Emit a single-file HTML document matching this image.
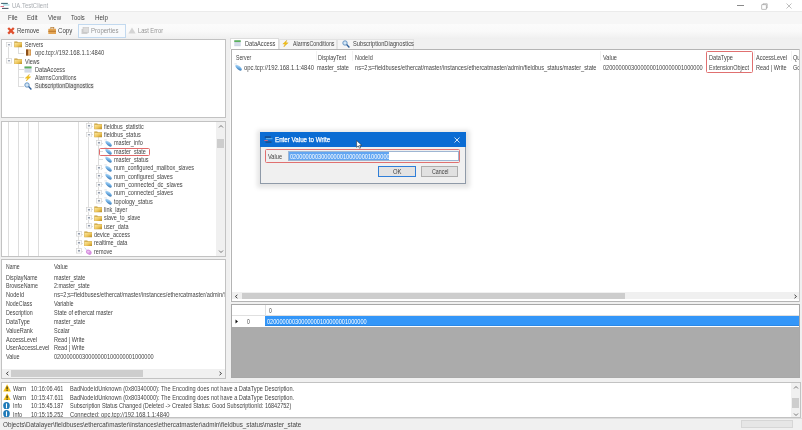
<!DOCTYPE html>
<html><head><meta charset="utf-8">
<style>
*{margin:0;padding:0;box-sizing:border-box}
html,body{width:802px;height:430px;overflow:hidden;background:#f0f0f0;font-family:"Liberation Sans",sans-serif;color:#444;font-size:5.7px;line-height:1;position:relative}
.a{position:absolute;display:block}
.t{position:absolute;white-space:nowrap;line-height:8px;height:8px;transform-origin:0 0;-webkit-text-stroke:0px currentColor}
</style></head><body>
<div class="a" style="left:0px;top:0px;width:802px;height:11px;background:#fff"></div>
<svg class="a" style="left:0px;top:2px" width="11" height="8" viewBox="0 0 11 8"><rect x="1.1" y="0.9" width="6.7" height="0.9" fill="#1f4f5f"/><rect x="3" y="2.5" width="6.5" height="0.9" fill="#7cc6d6"/><rect x="0.5" y="4.1" width="3.5" height="0.9" fill="#e0607a"/><rect x="2" y="5.9" width="6.5" height="0.9" fill="#2d3f4f"/></svg>
<div class="t" style="left:11.5px;top:1.60px;font-size:7.3px;transform:scaleX(0.8166);color:#a9adb2;">UA.TestClient</div>
<div class="a" style="left:736.5px;top:5px;width:7px;height:0.6px;background:#8a8a8a"></div>
<svg class="a" style="left:760.5px;top:2.5px" width="7" height="7" viewBox="0 0 7 7"><rect x="0.8" y="1.8" width="4.4" height="4.4" fill="none" stroke="#8a8a8a" stroke-width="0.55"/><path d="M2 1.8V0.8h4.2v4.2h-1" fill="none" stroke="#8a8a8a" stroke-width="0.55"/></svg>
<svg class="a" style="left:786px;top:3px" width="6" height="6" viewBox="0 0 6 6"><path d="M0.5 0.5L5.5 5.5M5.5 0.5L0.5 5.5" stroke="#8a8a8a" stroke-width="0.55"/></svg>
<div class="a" style="left:0px;top:11px;width:802px;height:13px;background:#f6f6f6;border-top:1px solid #ebebeb"></div>
<div class="t" style="left:7.5px;top:13.90px;font-size:6.6px;transform:scaleX(0.9149);">File</div>
<div class="t" style="left:27px;top:13.90px;font-size:6.6px;transform:scaleX(0.9172);">Edit</div>
<div class="t" style="left:47.6px;top:13.90px;font-size:6.6px;transform:scaleX(0.9192);">View</div>
<div class="t" style="left:71px;top:13.90px;font-size:6.6px;transform:scaleX(0.8854);">Tools</div>
<div class="t" style="left:94.6px;top:13.90px;font-size:6.6px;transform:scaleX(0.9533);">Help</div>
<div class="a" style="left:0px;top:24px;width:802px;height:15px;background:linear-gradient(#fbfbfb 0%,#f9f9f9 50%,#efefef 100%)"></div>
<svg class="a" style="left:7px;top:27px" width="8" height="7.5" viewBox="0 0 8 7.5"><path d="M1.2 1L6.8 6.6M6.8 1L1.2 6.6" stroke="#e0502f" stroke-width="2.3"/></svg>
<div class="t" style="left:16.8px;top:26.90px;font-size:6.6px;transform:scaleX(0.9142);">Remove</div>
<svg class="a" style="left:47.5px;top:26.5px" width="8.5" height="7.5" viewBox="0 0 8.5 7.5"><rect x="2.8" y="0.5" width="3" height="1.6" fill="none" stroke="#b27a30" stroke-width="0.7"/><rect x="0.3" y="1.8" width="8" height="5.6" rx="0.6" fill="#e3a453"/><rect x="0.3" y="3.8" width="8" height="1" fill="#b8772c"/></svg>
<div class="t" style="left:57.6px;top:26.90px;font-size:6.6px;transform:scaleX(0.9309);">Copy</div>
<div class="a" style="left:78px;top:24px;width:48px;height:14px;border:1px solid #c2d9ef;background:#f8fafc"></div>
<svg class="a" style="left:80.5px;top:27px" width="8.5" height="7.5" viewBox="0 0 8.5 7.5"><rect x="0.5" y="2" width="6" height="5" fill="#cfcfcf"/><rect x="2" y="0.5" width="6" height="5" fill="#dcdcdc" stroke="#bdbdbd" stroke-width="0.5"/></svg>
<div class="t" style="left:90.6px;top:26.90px;font-size:6.6px;transform:scaleX(0.9137);color:#959595;">Properties</div>
<svg class="a" style="left:128px;top:27px" width="8" height="7" viewBox="0 0 8 7"><path d="M4 0.5L7.6 6.6H0.4Z" fill="#d4d4d4"/></svg>
<div class="t" style="left:138px;top:26.90px;font-size:6.6px;transform:scaleX(0.8655);color:#959595;">Last Error</div>
<div class="a" style="left:1px;top:39px;width:225px;height:79px;background:#fff;border:1px solid #c2c2c2"></div>
<div class="a" style="left:8.4px;top:46.4px;width:0.6px;height:12.5px;background:#dddddd"></div>
<div class="a" style="left:18.4px;top:47.4px;width:0.6px;height:5.25px;background:#dddddd"></div>
<div class="a" style="left:18.4px;top:52.65px;width:5.600000000000001px;height:0.6px;background:#dddddd"></div>
<div class="a" style="left:18.4px;top:63.9px;width:0.6px;height:21.750000000000007px;background:#dddddd"></div>
<div class="a" style="left:18.4px;top:69.15px;width:5.600000000000001px;height:0.6px;background:#dddddd"></div>
<div class="a" style="left:18.4px;top:77.4px;width:5.600000000000001px;height:0.6px;background:#dddddd"></div>
<div class="a" style="left:18.4px;top:85.65px;width:5.600000000000001px;height:0.6px;background:#dddddd"></div>
<svg class="a" style="left:5.6px;top:41.6px" width="6" height="5.6" viewBox="0 0 6 5.6"><rect x="0.5" y="0.5" width="5" height="4.6" fill="#fff" stroke="#d4d4d4" stroke-width="0.7"/><path d="M1.9 2.8h2.2" stroke="#45546e" stroke-width="0.7"/></svg>
<svg class="a" style="left:14px;top:41.4px" width="8.4" height="6.6" viewBox="0 0 8.4 6.6"><defs><linearGradient id="fg" x1="0" y1="0" x2="1" y2="1"><stop offset="0" stop-color="#fbe9a6"/><stop offset="0.55" stop-color="#eec65a"/><stop offset="1" stop-color="#b88a22"/></linearGradient></defs><path d="M0.3 0.5h2.9l0.8 0.8h4.1v5h-7.8z" fill="#c49a34"/><rect x="0.6" y="1.7" width="7.3" height="4.3" fill="url(#fg)"/></svg>
<div class="t" style="left:25px;top:41.00px;font-size:6.6px;transform:scaleX(0.8028);">Servers</div>
<svg class="a" style="left:24.5px;top:49.15px" width="7" height="7" viewBox="0 0 7 7"><rect x="1" y="0.5" width="5" height="6" fill="#c07a30"/><rect x="1" y="0.5" width="2" height="6" fill="#8a4f1a"/><rect x="3.3" y="1.2" width="2.2" height="4.6" fill="#f0c080"/></svg>
<div class="t" style="left:35px;top:49.25px;font-size:6.6px;transform:scaleX(0.8868);">opc.tcp://192.168.1.1:4840</div>
<svg class="a" style="left:5.6px;top:58.1px" width="6" height="5.6" viewBox="0 0 6 5.6"><rect x="0.5" y="0.5" width="5" height="4.6" fill="#fff" stroke="#d4d4d4" stroke-width="0.7"/><path d="M1.9 2.8h2.2" stroke="#45546e" stroke-width="0.7"/></svg>
<svg class="a" style="left:14px;top:57.9px" width="8.4" height="6.6" viewBox="0 0 8.4 6.6"><defs><linearGradient id="fg" x1="0" y1="0" x2="1" y2="1"><stop offset="0" stop-color="#fbe9a6"/><stop offset="0.55" stop-color="#eec65a"/><stop offset="1" stop-color="#b88a22"/></linearGradient></defs><path d="M0.3 0.5h2.9l0.8 0.8h4.1v5h-7.8z" fill="#c49a34"/><rect x="0.6" y="1.7" width="7.3" height="4.3" fill="url(#fg)"/></svg>
<div class="t" style="left:25px;top:57.50px;font-size:6.6px;transform:scaleX(0.8350);">Views</div>
<svg class="a" style="left:24px;top:65.65px" width="8" height="7" viewBox="0 0 8 7"><rect x="0.5" y="0.5" width="7" height="6" fill="#c9d3e3"/><rect x="0.5" y="0.5" width="7" height="1.8" fill="#5bb15b"/><path d="M0.5 3.6h7M0.5 5h7" stroke="#f2f4f8" stroke-width="0.4"/></svg>
<div class="t" style="left:35px;top:65.75px;font-size:6.6px;transform:scaleX(0.8517);">DataAccess</div>
<svg class="a" style="left:24px;top:73.9px" width="8" height="7.5" viewBox="0 0 8 7.5"><path d="M5.5 0.2L1.2 4.2H3.6L2 7.3L6.8 2.8H4.3Z" fill="#f2c21b" stroke="#d49a00" stroke-width="0.3"/></svg>
<div class="t" style="left:35px;top:74.00px;font-size:6.6px;transform:scaleX(0.7990);">AlarmsConditions</div>
<div class="a" style="left:34.4px;top:82.85000000000001px;width:59.7px;height:5.7px;background:#f2f2f2"></div>
<svg class="a" style="left:24px;top:82.15px" width="8" height="8" viewBox="0 0 8 8"><circle cx="3" cy="3" r="2.2" fill="#d3e6f6" stroke="#5d8fc0" stroke-width="0.9"/><path d="M4.6 4.6L7.4 7.4" stroke="#2e5f99" stroke-width="1.4"/></svg>
<div class="t" style="left:35px;top:82.25px;font-size:6.6px;transform:scaleX(0.8317);">SubscriptionDiagnostics</div>
<div class="a" style="left:1px;top:121px;width:225px;height:136px;background:#fff;border:1px solid #c2c2c2"></div>
<div class="a" style="left:8.4px;top:122px;width:0.6px;height:134px;background:#dddddd"></div>
<div class="a" style="left:18.4px;top:122px;width:0.6px;height:134px;background:#dddddd"></div>
<div class="a" style="left:28.4px;top:122px;width:0.6px;height:134px;background:#dddddd"></div>
<div class="a" style="left:38.4px;top:122px;width:0.6px;height:134px;background:#dddddd"></div>
<div class="a" style="left:78.4px;top:122px;width:0.6px;height:128.9px;background:#dddddd"></div>
<div class="a" style="left:88.4px;top:122px;width:0.6px;height:103.94px;background:#dddddd"></div>
<div class="a" style="left:98.4px;top:137.42px;width:0.6px;height:63.56px;background:#dddddd"></div>
<div class="a" style="left:88.4px;top:126.1px;width:5.0px;height:0.6px;background:#dddddd"></div>
<svg class="a" style="left:85.6px;top:123.3px" width="6" height="5.6" viewBox="0 0 6 5.6"><rect x="0.5" y="0.5" width="5" height="4.6" fill="#fff" stroke="#d4d4d4" stroke-width="0.7"/><path d="M1.9 2.8h2.2" stroke="#45546e" stroke-width="0.7"/><path d="M3 1.8v2" stroke="#6a7890" stroke-width="0.5"/></svg>
<svg class="a" style="left:93.5px;top:123.1px" width="8.4" height="6.6" viewBox="0 0 8.4 6.6"><defs><linearGradient id="fg" x1="0" y1="0" x2="1" y2="1"><stop offset="0" stop-color="#fbe9a6"/><stop offset="0.55" stop-color="#eec65a"/><stop offset="1" stop-color="#b88a22"/></linearGradient></defs><path d="M0.3 0.5h2.9l0.8 0.8h4.1v5h-7.8z" fill="#c49a34"/><rect x="0.6" y="1.7" width="7.3" height="4.3" fill="url(#fg)"/></svg>
<div class="t" style="left:104.10000000000001px;top:122.70px;font-size:6.6px;transform:scaleX(0.8203);">fieldbus_statistic</div>
<div class="a" style="left:88.4px;top:134.42px;width:5.0px;height:0.6px;background:#dddddd"></div>
<svg class="a" style="left:85.6px;top:131.62px" width="6" height="5.6" viewBox="0 0 6 5.6"><rect x="0.5" y="0.5" width="5" height="4.6" fill="#fff" stroke="#d4d4d4" stroke-width="0.7"/><path d="M1.9 2.8h2.2" stroke="#45546e" stroke-width="0.7"/></svg>
<svg class="a" style="left:93.5px;top:131.42px" width="8.4" height="6.6" viewBox="0 0 8.4 6.6"><defs><linearGradient id="fg" x1="0" y1="0" x2="1" y2="1"><stop offset="0" stop-color="#fbe9a6"/><stop offset="0.55" stop-color="#eec65a"/><stop offset="1" stop-color="#b88a22"/></linearGradient></defs><path d="M0.3 0.5h2.9l0.8 0.8h4.1v5h-7.8z" fill="#c49a34"/><rect x="0.6" y="1.7" width="7.3" height="4.3" fill="url(#fg)"/></svg>
<div class="t" style="left:104.10000000000001px;top:131.02px;font-size:6.6px;transform:scaleX(0.8350);">fieldbus_status</div>
<div class="a" style="left:98.4px;top:142.74px;width:5.0px;height:0.6px;background:#dddddd"></div>
<svg class="a" style="left:95.6px;top:139.94px" width="6" height="5.6" viewBox="0 0 6 5.6"><rect x="0.5" y="0.5" width="5" height="4.6" fill="#fff" stroke="#d4d4d4" stroke-width="0.7"/><path d="M1.9 2.8h2.2" stroke="#45546e" stroke-width="0.7"/><path d="M3 1.8v2" stroke="#6a7890" stroke-width="0.5"/></svg>
<svg class="a" style="left:103.60000000000001px;top:138.74px" width="8.5" height="8.5" viewBox="0 0 8.5 8.5"><defs><linearGradient id="vg" x1="0" y1="0" x2="1" y2="1"><stop offset="0" stop-color="#d6ecfb"/><stop offset="0.5" stop-color="#6fb0e6"/><stop offset="1" stop-color="#2a5f96"/></linearGradient></defs><path d="M0.4 0.9h2.4" stroke="#d8dce2" stroke-width="0.9"/><ellipse cx="4.6" cy="4.7" rx="3.9" ry="1.8" transform="rotate(42 4.6 4.7)" fill="url(#vg)"/></svg>
<div class="t" style="left:114.10000000000001px;top:139.34px;font-size:6.6px;transform:scaleX(0.8350);">master_info</div>
<div class="a" style="left:98.4px;top:151.06px;width:5.0px;height:0.6px;background:#dddddd"></div>
<svg class="a" style="left:103.60000000000001px;top:147.06px" width="8.5" height="8.5" viewBox="0 0 8.5 8.5"><defs><linearGradient id="vg" x1="0" y1="0" x2="1" y2="1"><stop offset="0" stop-color="#d6ecfb"/><stop offset="0.5" stop-color="#6fb0e6"/><stop offset="1" stop-color="#2a5f96"/></linearGradient></defs><path d="M0.4 0.9h2.4" stroke="#d8dce2" stroke-width="0.9"/><ellipse cx="4.6" cy="4.7" rx="3.9" ry="1.8" transform="rotate(42 4.6 4.7)" fill="url(#vg)"/></svg>
<div class="t" style="left:114.10000000000001px;top:147.66px;font-size:6.6px;transform:scaleX(0.8350);">master_state</div>
<div class="a" style="left:98.4px;top:159.38px;width:5.0px;height:0.6px;background:#dddddd"></div>
<svg class="a" style="left:103.60000000000001px;top:155.38px" width="8.5" height="8.5" viewBox="0 0 8.5 8.5"><defs><linearGradient id="vg" x1="0" y1="0" x2="1" y2="1"><stop offset="0" stop-color="#d6ecfb"/><stop offset="0.5" stop-color="#6fb0e6"/><stop offset="1" stop-color="#2a5f96"/></linearGradient></defs><path d="M0.4 0.9h2.4" stroke="#d8dce2" stroke-width="0.9"/><ellipse cx="4.6" cy="4.7" rx="3.9" ry="1.8" transform="rotate(42 4.6 4.7)" fill="url(#vg)"/></svg>
<div class="t" style="left:114.10000000000001px;top:155.98px;font-size:6.6px;transform:scaleX(0.8350);">master_status</div>
<div class="a" style="left:98.4px;top:167.7px;width:5.0px;height:0.6px;background:#dddddd"></div>
<svg class="a" style="left:95.6px;top:164.9px" width="6" height="5.6" viewBox="0 0 6 5.6"><rect x="0.5" y="0.5" width="5" height="4.6" fill="#fff" stroke="#d4d4d4" stroke-width="0.7"/><path d="M1.9 2.8h2.2" stroke="#45546e" stroke-width="0.7"/><path d="M3 1.8v2" stroke="#6a7890" stroke-width="0.5"/></svg>
<svg class="a" style="left:103.60000000000001px;top:163.7px" width="8.5" height="8.5" viewBox="0 0 8.5 8.5"><defs><linearGradient id="vg" x1="0" y1="0" x2="1" y2="1"><stop offset="0" stop-color="#d6ecfb"/><stop offset="0.5" stop-color="#6fb0e6"/><stop offset="1" stop-color="#2a5f96"/></linearGradient></defs><path d="M0.4 0.9h2.4" stroke="#d8dce2" stroke-width="0.9"/><ellipse cx="4.6" cy="4.7" rx="3.9" ry="1.8" transform="rotate(42 4.6 4.7)" fill="url(#vg)"/></svg>
<div class="t" style="left:114.10000000000001px;top:164.30px;font-size:6.6px;transform:scaleX(0.8327);">num_configured_mailbox_slaves</div>
<div class="a" style="left:98.4px;top:176.01999999999998px;width:5.0px;height:0.6px;background:#dddddd"></div>
<svg class="a" style="left:95.6px;top:173.22px" width="6" height="5.6" viewBox="0 0 6 5.6"><rect x="0.5" y="0.5" width="5" height="4.6" fill="#fff" stroke="#d4d4d4" stroke-width="0.7"/><path d="M1.9 2.8h2.2" stroke="#45546e" stroke-width="0.7"/><path d="M3 1.8v2" stroke="#6a7890" stroke-width="0.5"/></svg>
<svg class="a" style="left:103.60000000000001px;top:172.01999999999998px" width="8.5" height="8.5" viewBox="0 0 8.5 8.5"><defs><linearGradient id="vg" x1="0" y1="0" x2="1" y2="1"><stop offset="0" stop-color="#d6ecfb"/><stop offset="0.5" stop-color="#6fb0e6"/><stop offset="1" stop-color="#2a5f96"/></linearGradient></defs><path d="M0.4 0.9h2.4" stroke="#d8dce2" stroke-width="0.9"/><ellipse cx="4.6" cy="4.7" rx="3.9" ry="1.8" transform="rotate(42 4.6 4.7)" fill="url(#vg)"/></svg>
<div class="t" style="left:114.10000000000001px;top:172.62px;font-size:6.6px;transform:scaleX(0.8432);">num_configured_slaves</div>
<div class="a" style="left:98.4px;top:184.34px;width:5.0px;height:0.6px;background:#dddddd"></div>
<svg class="a" style="left:95.6px;top:181.54px" width="6" height="5.6" viewBox="0 0 6 5.6"><rect x="0.5" y="0.5" width="5" height="4.6" fill="#fff" stroke="#d4d4d4" stroke-width="0.7"/><path d="M1.9 2.8h2.2" stroke="#45546e" stroke-width="0.7"/><path d="M3 1.8v2" stroke="#6a7890" stroke-width="0.5"/></svg>
<svg class="a" style="left:103.60000000000001px;top:180.34px" width="8.5" height="8.5" viewBox="0 0 8.5 8.5"><defs><linearGradient id="vg" x1="0" y1="0" x2="1" y2="1"><stop offset="0" stop-color="#d6ecfb"/><stop offset="0.5" stop-color="#6fb0e6"/><stop offset="1" stop-color="#2a5f96"/></linearGradient></defs><path d="M0.4 0.9h2.4" stroke="#d8dce2" stroke-width="0.9"/><ellipse cx="4.6" cy="4.7" rx="3.9" ry="1.8" transform="rotate(42 4.6 4.7)" fill="url(#vg)"/></svg>
<div class="t" style="left:114.10000000000001px;top:180.94px;font-size:6.6px;transform:scaleX(0.8590);">num_connected_dc_slaves</div>
<div class="a" style="left:98.4px;top:192.66px;width:5.0px;height:0.6px;background:#dddddd"></div>
<svg class="a" style="left:95.6px;top:189.86px" width="6" height="5.6" viewBox="0 0 6 5.6"><rect x="0.5" y="0.5" width="5" height="4.6" fill="#fff" stroke="#d4d4d4" stroke-width="0.7"/><path d="M1.9 2.8h2.2" stroke="#45546e" stroke-width="0.7"/><path d="M3 1.8v2" stroke="#6a7890" stroke-width="0.5"/></svg>
<svg class="a" style="left:103.60000000000001px;top:188.66px" width="8.5" height="8.5" viewBox="0 0 8.5 8.5"><defs><linearGradient id="vg" x1="0" y1="0" x2="1" y2="1"><stop offset="0" stop-color="#d6ecfb"/><stop offset="0.5" stop-color="#6fb0e6"/><stop offset="1" stop-color="#2a5f96"/></linearGradient></defs><path d="M0.4 0.9h2.4" stroke="#d8dce2" stroke-width="0.9"/><ellipse cx="4.6" cy="4.7" rx="3.9" ry="1.8" transform="rotate(42 4.6 4.7)" fill="url(#vg)"/></svg>
<div class="t" style="left:114.10000000000001px;top:189.26px;font-size:6.6px;transform:scaleX(0.8520);">num_connected_slaves</div>
<div class="a" style="left:98.4px;top:200.98px;width:5.0px;height:0.6px;background:#dddddd"></div>
<svg class="a" style="left:95.6px;top:198.18px" width="6" height="5.6" viewBox="0 0 6 5.6"><rect x="0.5" y="0.5" width="5" height="4.6" fill="#fff" stroke="#d4d4d4" stroke-width="0.7"/><path d="M1.9 2.8h2.2" stroke="#45546e" stroke-width="0.7"/><path d="M3 1.8v2" stroke="#6a7890" stroke-width="0.5"/></svg>
<svg class="a" style="left:103.60000000000001px;top:196.98px" width="8.5" height="8.5" viewBox="0 0 8.5 8.5"><defs><linearGradient id="vg" x1="0" y1="0" x2="1" y2="1"><stop offset="0" stop-color="#d6ecfb"/><stop offset="0.5" stop-color="#6fb0e6"/><stop offset="1" stop-color="#2a5f96"/></linearGradient></defs><path d="M0.4 0.9h2.4" stroke="#d8dce2" stroke-width="0.9"/><ellipse cx="4.6" cy="4.7" rx="3.9" ry="1.8" transform="rotate(42 4.6 4.7)" fill="url(#vg)"/></svg>
<div class="t" style="left:114.10000000000001px;top:197.58px;font-size:6.6px;transform:scaleX(0.8375);">topology_status</div>
<div class="a" style="left:88.4px;top:209.3px;width:5.0px;height:0.6px;background:#dddddd"></div>
<svg class="a" style="left:85.6px;top:206.5px" width="6" height="5.6" viewBox="0 0 6 5.6"><rect x="0.5" y="0.5" width="5" height="4.6" fill="#fff" stroke="#d4d4d4" stroke-width="0.7"/><path d="M1.9 2.8h2.2" stroke="#45546e" stroke-width="0.7"/><path d="M3 1.8v2" stroke="#6a7890" stroke-width="0.5"/></svg>
<svg class="a" style="left:93.5px;top:206.3px" width="8.4" height="6.6" viewBox="0 0 8.4 6.6"><defs><linearGradient id="fg" x1="0" y1="0" x2="1" y2="1"><stop offset="0" stop-color="#fbe9a6"/><stop offset="0.55" stop-color="#eec65a"/><stop offset="1" stop-color="#b88a22"/></linearGradient></defs><path d="M0.3 0.5h2.9l0.8 0.8h4.1v5h-7.8z" fill="#c49a34"/><rect x="0.6" y="1.7" width="7.3" height="4.3" fill="url(#fg)"/></svg>
<div class="t" style="left:104.10000000000001px;top:205.90px;font-size:6.6px;transform:scaleX(0.8350);">link_layer</div>
<div class="a" style="left:88.4px;top:217.62px;width:5.0px;height:0.6px;background:#dddddd"></div>
<svg class="a" style="left:85.6px;top:214.82px" width="6" height="5.6" viewBox="0 0 6 5.6"><rect x="0.5" y="0.5" width="5" height="4.6" fill="#fff" stroke="#d4d4d4" stroke-width="0.7"/><path d="M1.9 2.8h2.2" stroke="#45546e" stroke-width="0.7"/><path d="M3 1.8v2" stroke="#6a7890" stroke-width="0.5"/></svg>
<svg class="a" style="left:93.5px;top:214.62px" width="8.4" height="6.6" viewBox="0 0 8.4 6.6"><defs><linearGradient id="fg" x1="0" y1="0" x2="1" y2="1"><stop offset="0" stop-color="#fbe9a6"/><stop offset="0.55" stop-color="#eec65a"/><stop offset="1" stop-color="#b88a22"/></linearGradient></defs><path d="M0.3 0.5h2.9l0.8 0.8h4.1v5h-7.8z" fill="#c49a34"/><rect x="0.6" y="1.7" width="7.3" height="4.3" fill="url(#fg)"/></svg>
<div class="t" style="left:104.10000000000001px;top:214.22px;font-size:6.6px;transform:scaleX(0.8350);">slave_to_slave</div>
<div class="a" style="left:88.4px;top:225.94px;width:5.0px;height:0.6px;background:#dddddd"></div>
<svg class="a" style="left:85.6px;top:223.14px" width="6" height="5.6" viewBox="0 0 6 5.6"><rect x="0.5" y="0.5" width="5" height="4.6" fill="#fff" stroke="#d4d4d4" stroke-width="0.7"/><path d="M1.9 2.8h2.2" stroke="#45546e" stroke-width="0.7"/><path d="M3 1.8v2" stroke="#6a7890" stroke-width="0.5"/></svg>
<svg class="a" style="left:93.5px;top:222.94px" width="8.4" height="6.6" viewBox="0 0 8.4 6.6"><defs><linearGradient id="fg" x1="0" y1="0" x2="1" y2="1"><stop offset="0" stop-color="#fbe9a6"/><stop offset="0.55" stop-color="#eec65a"/><stop offset="1" stop-color="#b88a22"/></linearGradient></defs><path d="M0.3 0.5h2.9l0.8 0.8h4.1v5h-7.8z" fill="#c49a34"/><rect x="0.6" y="1.7" width="7.3" height="4.3" fill="url(#fg)"/></svg>
<div class="t" style="left:104.10000000000001px;top:222.54px;font-size:6.6px;transform:scaleX(0.8350);">user_data</div>
<div class="a" style="left:78.4px;top:234.26px;width:5.0px;height:0.6px;background:#dddddd"></div>
<svg class="a" style="left:75.6px;top:231.46px" width="6" height="5.6" viewBox="0 0 6 5.6"><rect x="0.5" y="0.5" width="5" height="4.6" fill="#fff" stroke="#d4d4d4" stroke-width="0.7"/><path d="M1.9 2.8h2.2" stroke="#45546e" stroke-width="0.7"/><path d="M3 1.8v2" stroke="#6a7890" stroke-width="0.5"/></svg>
<svg class="a" style="left:83.5px;top:231.26px" width="8.4" height="6.6" viewBox="0 0 8.4 6.6"><defs><linearGradient id="fg" x1="0" y1="0" x2="1" y2="1"><stop offset="0" stop-color="#fbe9a6"/><stop offset="0.55" stop-color="#eec65a"/><stop offset="1" stop-color="#b88a22"/></linearGradient></defs><path d="M0.3 0.5h2.9l0.8 0.8h4.1v5h-7.8z" fill="#c49a34"/><rect x="0.6" y="1.7" width="7.3" height="4.3" fill="url(#fg)"/></svg>
<div class="t" style="left:94.10000000000001px;top:230.86px;font-size:6.6px;transform:scaleX(0.8350);">device_access</div>
<div class="a" style="left:78.4px;top:242.57999999999998px;width:5.0px;height:0.6px;background:#dddddd"></div>
<svg class="a" style="left:75.6px;top:239.78px" width="6" height="5.6" viewBox="0 0 6 5.6"><rect x="0.5" y="0.5" width="5" height="4.6" fill="#fff" stroke="#d4d4d4" stroke-width="0.7"/><path d="M1.9 2.8h2.2" stroke="#45546e" stroke-width="0.7"/><path d="M3 1.8v2" stroke="#6a7890" stroke-width="0.5"/></svg>
<svg class="a" style="left:83.5px;top:239.57999999999998px" width="8.4" height="6.6" viewBox="0 0 8.4 6.6"><defs><linearGradient id="fg" x1="0" y1="0" x2="1" y2="1"><stop offset="0" stop-color="#fbe9a6"/><stop offset="0.55" stop-color="#eec65a"/><stop offset="1" stop-color="#b88a22"/></linearGradient></defs><path d="M0.3 0.5h2.9l0.8 0.8h4.1v5h-7.8z" fill="#c49a34"/><rect x="0.6" y="1.7" width="7.3" height="4.3" fill="url(#fg)"/></svg>
<div class="t" style="left:94.10000000000001px;top:239.18px;font-size:6.6px;transform:scaleX(0.8350);">realtime_data</div>
<div class="a" style="left:78.4px;top:250.9px;width:5.0px;height:0.6px;background:#dddddd"></div>
<svg class="a" style="left:75.6px;top:248.1px" width="6" height="5.6" viewBox="0 0 6 5.6"><rect x="0.5" y="0.5" width="5" height="4.6" fill="#fff" stroke="#d4d4d4" stroke-width="0.7"/><path d="M1.9 2.8h2.2" stroke="#45546e" stroke-width="0.7"/><path d="M3 1.8v2" stroke="#6a7890" stroke-width="0.5"/></svg>
<svg class="a" style="left:83.9px;top:246.70000000000002px" width="8" height="8.5" viewBox="0 0 8 8.5"><path d="M0.6 0.6L3 3.5" stroke="#b9c4d8" stroke-width="0.7"/><ellipse cx="4.8" cy="5.2" rx="3" ry="2.3" transform="rotate(35 4.8 5.2)" fill="#d690df"/><ellipse cx="4.3" cy="4.7" rx="1.4" ry="1" fill="#ecc3f0"/></svg>
<div class="t" style="left:94.10000000000001px;top:247.50px;font-size:6.6px;transform:scaleX(0.8350);">remove</div>
<div class="a" style="left:98.8px;top:147.5px;width:51px;height:8px;border:1px solid #e06a6a;border-radius:1.5px"></div>
<div class="a" style="left:216px;top:122px;width:9px;height:134px;background:#f0f0f0"></div>
<svg class="a" style="left:217.5px;top:124px" width="6" height="5" viewBox="0 0 6 5"><path d="M1 3.5L3 1.5L5 3.5" fill="none" stroke="#555" stroke-width="0.8"/></svg>
<div class="a" style="left:217px;top:138.5px;width:7px;height:9.5px;background:#cdcdcd"></div>
<svg class="a" style="left:217.5px;top:248.5px" width="6" height="5" viewBox="0 0 6 5"><path d="M1 1.5L3 3.5L5 1.5" fill="none" stroke="#555" stroke-width="0.8"/></svg>
<div class="a" style="left:1px;top:259px;width:225px;height:120px;background:#fff;border:1px solid #c2c2c2"></div>
<div class="t" style="left:5.9px;top:262.70px;font-size:6.6px;transform:scaleX(0.7749);">Name</div>
<div class="t" style="left:54.2px;top:262.70px;font-size:6.6px;transform:scaleX(0.8506);">Value</div>
<div class="t" style="left:5.9px;top:273.50px;font-size:6.6px;transform:scaleX(0.8051);">DisplayName</div>
<div class="t" style="left:54.2px;top:273.50px;font-size:6.6px;transform:scaleX(0.8177);">master_state</div>
<div class="t" style="left:5.9px;top:282.37px;font-size:6.6px;transform:scaleX(0.8052);">BrowseName</div>
<div class="t" style="left:54.2px;top:282.37px;font-size:6.6px;transform:scaleX(0.8180);">2:master_state</div>
<div class="t" style="left:5.9px;top:291.24px;font-size:6.6px;transform:scaleX(0.8531);">NodeId</div>
<div class="t" style="left:54.2px;top:291.24px;font-size:6.6px;transform:scaleX(0.8569);width:199.3px;overflow:hidden;">ns=2;s=fieldbuses/ethercat/master/instances/ethercatmaster/admin/fieldbus_status/master_state</div>
<div class="t" style="left:5.9px;top:300.11px;font-size:6.6px;transform:scaleX(0.8110);">NodeClass</div>
<div class="t" style="left:54.2px;top:300.11px;font-size:6.6px;transform:scaleX(0.8287);">Variable</div>
<div class="t" style="left:5.9px;top:308.98px;font-size:6.6px;transform:scaleX(0.8082);">Description</div>
<div class="t" style="left:54.2px;top:308.98px;font-size:6.6px;transform:scaleX(0.8345);">State of ethercat master</div>
<div class="t" style="left:5.9px;top:317.85px;font-size:6.6px;transform:scaleX(0.8486);">DataType</div>
<div class="t" style="left:54.2px;top:317.85px;font-size:6.6px;transform:scaleX(0.8177);">master_state</div>
<div class="t" style="left:5.9px;top:326.72px;font-size:6.6px;transform:scaleX(0.8391);">ValueRank</div>
<div class="t" style="left:54.2px;top:326.72px;font-size:6.6px;transform:scaleX(0.8350);">Scalar</div>
<div class="t" style="left:5.9px;top:335.59px;font-size:6.6px;transform:scaleX(0.8419);">AccessLevel</div>
<div class="t" style="left:54.2px;top:335.59px;font-size:6.6px;transform:scaleX(0.8396);">Read | Write</div>
<div class="t" style="left:5.9px;top:344.46px;font-size:6.6px;transform:scaleX(0.8499);">UserAccessLevel</div>
<div class="t" style="left:54.2px;top:344.46px;font-size:6.6px;transform:scaleX(0.8396);">Read | Write</div>
<div class="t" style="left:5.9px;top:353.33px;font-size:6.6px;transform:scaleX(0.8350);">Value</div>
<div class="t" style="left:54.2px;top:353.33px;font-size:6.6px;transform:scaleX(0.8497);">02000000030000000100000001000000</div>
<div class="a" style="left:2px;top:369px;width:223px;height:8.5px;background:#f0f0f0"></div>
<div class="a" style="left:11.2px;top:369.6px;width:131.8px;height:7px;background:#cdcdcd"></div>
<svg class="a" style="left:4.5px;top:370.7px" width="5" height="5" viewBox="0 0 5 5"><path d="M3.4 0.8L1.4 2.5L3.4 4.2" fill="none" stroke="#444" stroke-width="1"/></svg>
<svg class="a" style="left:217.5px;top:370.5px" width="5" height="5" viewBox="0 0 5 5"><path d="M1.5 0.8L3.5 2.5L1.5 4.2" fill="none" stroke="#444" stroke-width="1"/></svg>
<div class="a" style="left:279px;top:39px;width:58px;height:9.5px;background:#f5f5f5;border:1px solid #e3e3e3;border-bottom:none"></div>
<div class="a" style="left:337px;top:39px;width:77px;height:9.5px;background:#f5f5f5;border:1px solid #e3e3e3;border-bottom:none"></div>
<div class="a" style="left:230px;top:38px;width:49px;height:11.5px;background:#fff;border:1px solid #dcdcdc;border-bottom:none"></div>
<div class="a" style="left:231px;top:48.7px;width:568.5px;height:253px;background:transparent;border:1px solid #b4b4b4"></div>
<div class="a" style="left:229.6px;top:49px;width:1px;height:253px;background:#fafafa"></div>
<div class="a" style="left:232px;top:49.7px;width:566.5px;height:251px;background:#fff"></div>
<svg class="a" style="left:233.5px;top:40px" width="7" height="6.5" viewBox="0 0 7 6.5"><rect x="0.3" y="0.3" width="6.4" height="5.9" fill="#c8d2e2"/><rect x="0.3" y="0.3" width="6.4" height="1.7" fill="#5bb15b"/><path d="M0.3 3.4h6.4M0.3 4.8h6.4" stroke="#eef1f6" stroke-width="0.4"/></svg>
<div class="t" style="left:244.5px;top:39.70px;font-size:6.6px;transform:scaleX(0.8659);">DataAccess</div>
<svg class="a" style="left:282px;top:39.5px" width="7" height="7.5" viewBox="0 0 7 7.5"><path d="M4.8 0.2L0.8 4H3L1.6 7.2L6.2 2.8H3.9Z" fill="#f2c21b" stroke="#d49a00" stroke-width="0.3"/></svg>
<div class="t" style="left:293px;top:40.40px;font-size:6.6px;transform:scaleX(0.8029);">AlarmsConditions</div>
<svg class="a" style="left:341.5px;top:39.5px" width="8" height="8" viewBox="0 0 8 8"><circle cx="3" cy="3" r="2.2" fill="#d3e6f6" stroke="#5d8fc0" stroke-width="0.9"/><path d="M4.6 4.6L7.4 7.4" stroke="#2e5f99" stroke-width="1.4"/></svg>
<div class="t" style="left:352.7px;top:40.40px;font-size:6.6px;transform:scaleX(0.8644);">SubscriptionDiagnostics</div>
<div class="a" style="left:315.5px;top:51px;width:0.6px;height:10px;background:#f2f2f2"></div>
<div class="a" style="left:352.2px;top:51px;width:0.6px;height:10px;background:#f2f2f2"></div>
<div class="a" style="left:599.7px;top:51px;width:0.6px;height:10px;background:#f2f2f2"></div>
<div class="a" style="left:705.5px;top:51px;width:0.6px;height:10px;background:#f2f2f2"></div>
<div class="a" style="left:753.5px;top:51px;width:0.6px;height:10px;background:#f2f2f2"></div>
<div class="a" style="left:790.5px;top:51px;width:0.6px;height:10px;background:#f2f2f2"></div>
<div class="t" style="left:236.1px;top:53.60px;font-size:6.6px;transform:scaleX(0.7843);">Server</div>
<div class="t" style="left:317.6px;top:53.60px;font-size:6.6px;transform:scaleX(0.8293);">DisplayText</div>
<div class="t" style="left:355.3px;top:53.60px;font-size:6.6px;transform:scaleX(0.8350);">NodeId</div>
<div class="t" style="left:602.7px;top:53.60px;font-size:6.6px;transform:scaleX(0.8506);">Value</div>
<div class="t" style="left:708.9px;top:53.60px;font-size:6.6px;transform:scaleX(0.8486);">DataType</div>
<div class="t" style="left:755.6px;top:53.60px;font-size:6.6px;transform:scaleX(0.8419);">AccessLevel</div>
<div class="t" style="left:793.4px;top:53.60px;font-size:6.6px;transform:scaleX(0.8350);">Quality</div>
<svg class="a" style="left:233.8px;top:62.7px" width="8.5" height="8.5" viewBox="0 0 8.5 8.5"><defs><linearGradient id="vg" x1="0" y1="0" x2="1" y2="1"><stop offset="0" stop-color="#d6ecfb"/><stop offset="0.5" stop-color="#6fb0e6"/><stop offset="1" stop-color="#2a5f96"/></linearGradient></defs><path d="M0.4 0.9h2.4" stroke="#d8dce2" stroke-width="0.9"/><ellipse cx="4.6" cy="4.7" rx="3.9" ry="1.8" transform="rotate(42 4.6 4.7)" fill="url(#vg)"/></svg>
<div class="t" style="left:243.6px;top:64.10px;font-size:6.6px;transform:scaleX(0.8958);">opc.tcp://192.168.1.1:4840</div>
<div class="t" style="left:316.9px;top:64.10px;font-size:6.6px;transform:scaleX(0.8361);">master_state</div>
<div class="t" style="left:355.3px;top:64.10px;font-size:6.6px;transform:scaleX(0.8569);">ns=2;s=fieldbuses/ethercat/master/instances/ethercatmaster/admin/fieldbus_status/master_state</div>
<div class="t" style="left:602.7px;top:64.10px;font-size:6.6px;transform:scaleX(0.8497);">02000000030000000100000001000000</div>
<div class="t" style="left:708.9px;top:64.10px;font-size:6.6px;transform:scaleX(0.8350);">ExtensionObject</div>
<div class="t" style="left:755.6px;top:64.10px;font-size:6.6px;transform:scaleX(0.8396);">Read | Write</div>
<div class="t" style="left:793.4px;top:64.10px;font-size:6.6px;transform:scaleX(0.8350);">Good</div>
<div class="a" style="left:799.5px;top:49.7px;width:2.5px;height:252px;background:#f0f0f0"></div>
<div class="a" style="left:798.5px;top:48.7px;width:1px;height:253px;background:#c8c8c8"></div>
<div class="a" style="left:705.8px;top:51.4px;width:47.3px;height:21.4px;border:1.2px solid #e07070;border-radius:1.5px"></div>
<div class="a" style="left:232px;top:292.3px;width:566.5px;height:7.2px;background:#f0f0f0"></div>
<svg class="a" style="left:234px;top:294px" width="5" height="5" viewBox="0 0 5 5"><path d="M3.4 0.8L1.4 2.5L3.4 4.2" fill="none" stroke="#444" stroke-width="1"/></svg>
<div class="a" style="left:241.5px;top:292.6px;width:383px;height:6.8px;background:#cdcdcd"></div>
<svg class="a" style="left:793px;top:294px" width="5" height="5" viewBox="0 0 5 5"><path d="M1.5 0.8L3.5 2.5L1.5 4.2" fill="none" stroke="#444" stroke-width="1"/></svg>
<div class="a" style="left:231px;top:304px;width:569px;height:74px;background:#ababab;border:1px solid #a8a8a8"></div>
<div class="a" style="left:232px;top:305px;width:567px;height:22px;background:#fff"></div>
<div class="a" style="left:264.7px;top:315px;width:534.3px;height:11.4px;background:#3396f8;border-top:0.6px solid #2382e0;border-bottom:0.6px solid #2b88e6"></div>
<div class="a" style="left:232px;top:315px;width:567px;height:0.6px;background:#e0e0e0"></div>
<div class="a" style="left:264.5px;top:305px;width:0.6px;height:10px;background:#e0e0e0"></div>
<div class="t" style="left:268.6px;top:306.60px;font-size:6.6px;transform:scaleX(0.7652);">0</div>
<svg class="a" style="left:235px;top:318.7px" width="4" height="5" viewBox="0 0 4 5"><path d="M0.5 0.5L3 2.5L0.5 4.5Z" fill="#111"/></svg>
<div class="t" style="left:246.9px;top:317.60px;font-size:6.6px;transform:scaleX(0.7652);">0</div>
<div class="t" style="left:267.2px;top:317.60px;font-size:6.6px;transform:scaleX(0.8497);color:#fff;">02000000030000000100000001000000</div>
<div class="a" style="left:256.5px;top:129.5px;width:213px;height:58px;background:rgba(0,0,0,0.10);filter:blur(2px);border-radius:2px"></div>
<div class="a" style="left:259.9px;top:132px;width:205.8px;height:51.5px;background:#f0f0f0;border:1px solid #8f9aa8"></div>
<div class="a" style="left:259.9px;top:132px;width:205.8px;height:14.9px;background:#0b6cd3"></div>
<svg class="a" style="left:263.5px;top:136px" width="9" height="7" viewBox="0 0 9 7"><rect x="0.8" y="0.6" width="6" height="0.9" fill="#1d3358"/><rect x="2" y="2.3" width="6.5" height="0.9" fill="#7cc0e8"/><rect x="0.3" y="4" width="3.5" height="0.9" fill="#e06080"/><rect x="1.5" y="5.6" width="6" height="0.9" fill="#233a5a"/></svg>
<div class="t" style="left:275.2px;top:136.20px;font-size:7.3px;transform:scaleX(0.8534);color:#fff;-webkit-text-stroke:0.25px #fff">Enter Value to Write</div>
<svg class="a" style="left:453.5px;top:137px" width="6" height="6" viewBox="0 0 6 6"><path d="M0.5 0.5L5.5 5.5M5.5 0.5L0.5 5.5" stroke="#fff" stroke-width="0.8"/></svg>
<svg class="a" style="left:355.5px;top:139.5px" width="6" height="9" viewBox="0 0 6 9"><path d="M0.6 0.6V7.4L2.3 5.8L3.6 8.4L4.7 7.9L3.5 5.4H5.8Z" fill="#fff" stroke="#222" stroke-width="0.5"/></svg>
<div class="a" style="left:265px;top:148.7px;width:195.3px;height:14.5px;border:1.2px solid #e07070;border-radius:1.5px"></div>
<div class="t" style="left:268.2px;top:153.00px;font-size:6.6px;transform:scaleX(0.8568);">Value</div>
<div class="a" style="left:287.5px;top:151.4px;width:171.3px;height:9.7px;background:#fff;border:1px solid #9fb6d3"></div>
<div class="a" style="left:288.8px;top:152.2px;width:100.6px;height:7.4px;background:#62a6f2"></div>
<div class="t" style="left:289.5px;top:152.70px;font-size:6.6px;transform:scaleX(0.8497);color:#fff;">02000000030000000100000001000000</div>
<div class="a" style="left:378.3px;top:166px;width:37.7px;height:10.7px;background:#e3e3e3;border:1.2px solid #2f7ed8"></div>
<div class="t" style="left:392.5px;top:168.00px;font-size:6.6px;transform:scaleX(0.8940);">OK</div>
<div class="a" style="left:420.6px;top:166px;width:37.8px;height:10.7px;background:#e1e1e1;border:1px solid #adadad"></div>
<div class="t" style="left:431.5px;top:168.00px;font-size:6.6px;transform:scaleX(0.8056);">Cancel</div>
<div class="a" style="left:1px;top:382px;width:800px;height:36px;background:#fff;border:1px solid #c2c2c2"></div>
<svg class="a" style="left:3px;top:383.8px" width="8.2" height="7.8" viewBox="0 0 8.2 7.8"><path d="M4.1 0.2L8 7.5H0.2Z" fill="#f4c21a"/><path d="M4.1 2.4V5.2" stroke="#1a1a1a" stroke-width="1.1"/><rect x="3.55" y="5.8" width="1.1" height="1" fill="#1a1a1a"/></svg>
<div class="t" style="left:13px;top:384.70px;font-size:6.6px;transform:scaleX(0.8400);">Warn</div>
<div class="t" style="left:30.6px;top:384.70px;font-size:6.6px;transform:scaleX(0.8408);">10:16:06.461</div>
<div class="t" style="left:69.5px;top:384.70px;font-size:6.6px;transform:scaleX(0.8534);">BadNodeIdUnknown (0x80340000): The Encoding does not have a DataType Description.</div>
<svg class="a" style="left:3px;top:392.59999999999997px" width="8.2" height="7.8" viewBox="0 0 8.2 7.8"><path d="M4.1 0.2L8 7.5H0.2Z" fill="#f4c21a"/><path d="M4.1 2.4V5.2" stroke="#1a1a1a" stroke-width="1.1"/><rect x="3.55" y="5.8" width="1.1" height="1" fill="#1a1a1a"/></svg>
<div class="t" style="left:13px;top:393.50px;font-size:6.6px;transform:scaleX(0.8400);">Warn</div>
<div class="t" style="left:30.6px;top:393.50px;font-size:6.6px;transform:scaleX(0.8516);">10:15:47.611</div>
<div class="t" style="left:69.5px;top:393.50px;font-size:6.6px;transform:scaleX(0.8534);">BadNodeIdUnknown (0x80340000): The Encoding does not have a DataType Description.</div>
<svg class="a" style="left:3.4px;top:401.5px" width="7" height="7.6" viewBox="0 0 7 7.6"><ellipse cx="3.5" cy="3.8" rx="3.3" ry="3.7" fill="#1f7ab8"/><path d="M3.5 1.4V6.3" stroke="#fff" stroke-width="1.1"/></svg>
<div class="t" style="left:13px;top:402.40px;font-size:6.6px;transform:scaleX(0.8201);">Info</div>
<div class="t" style="left:30.6px;top:402.40px;font-size:6.6px;transform:scaleX(0.8408);">10:15:45.187</div>
<div class="t" style="left:69.5px;top:402.40px;font-size:6.6px;transform:scaleX(0.8367);">Subscription Status Changed (Deleted -&gt; Created Status: Good SubscriptionId: 16842752)</div>
<svg class="a" style="left:3.4px;top:409.9px" width="7" height="7.6" viewBox="0 0 7 7.6"><ellipse cx="3.5" cy="3.8" rx="3.3" ry="3.7" fill="#1f7ab8"/><path d="M3.5 1.4V6.3" stroke="#fff" stroke-width="1.1"/></svg>
<div class="t" style="left:13px;top:410.80px;font-size:6.6px;transform:scaleX(0.8201);">Info</div>
<div class="t" style="left:30.6px;top:410.80px;font-size:6.6px;transform:scaleX(0.8408);">10:15:15.252</div>
<div class="t" style="left:69.5px;top:410.80px;font-size:6.6px;transform:scaleX(0.8748);">Connected: opc.tcp://192.168.1.1:4840</div>
<div class="a" style="left:791px;top:383px;width:9px;height:34px;background:#f0f0f0"></div>
<svg class="a" style="left:792.5px;top:384.5px" width="6" height="5" viewBox="0 0 6 5"><path d="M1 3.5L3 1.5L5 3.5" fill="none" stroke="#555" stroke-width="0.8"/></svg>
<div class="a" style="left:792px;top:398px;width:7px;height:10px;background:#cdcdcd"></div>
<svg class="a" style="left:792.5px;top:411.5px" width="6" height="5" viewBox="0 0 6 5"><path d="M1 1.5L3 3.5L5 1.5" fill="none" stroke="#555" stroke-width="0.8"/></svg>
<div class="a" style="left:0px;top:418px;width:802px;height:12px;background:#f0f0f0;border-top:1px solid #dcdcdc"></div>
<div class="t" style="left:3px;top:421.10px;font-size:6.6px;transform:scaleX(0.9537);">Objects\Datalayer\fieldbuses\ethercat\master\instances\ethercatmaster\admin\fieldbus_status\master_state</div>
<div class="a" style="left:741px;top:420px;width:52px;height:8px;background:#e6e6e6;border:1px solid #d6d6d6"></div>
</body></html>
